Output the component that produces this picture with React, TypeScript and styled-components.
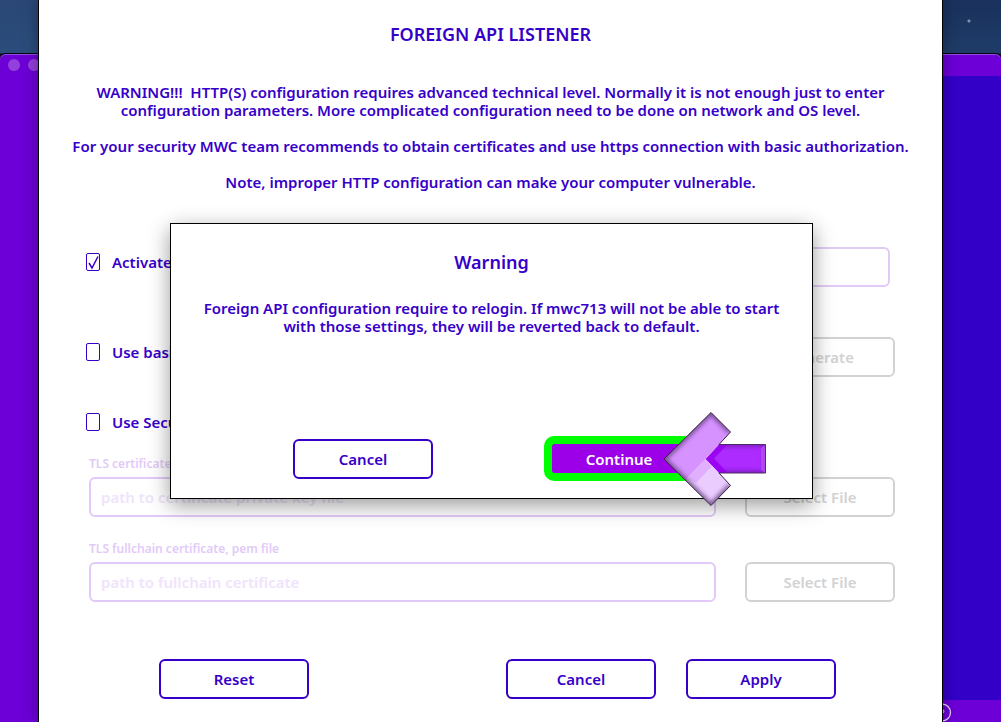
import React from "react";
import styled, { createGlobalStyle } from "styled-components";

const INK = "#3600c9";
const VIOLET = "#6c00d6";
const PALE = "#e2caf8";
const GREY = "#d2d2d2";

const GlobalStyle = createGlobalStyle`
  * { box-sizing: border-box; }
  body {
    margin: 0;
    font-family: "Noto Sans", "Open Sans", sans-serif;
    font-size: 15px;
    font-weight: 600;
    line-height: 18px;
    color: ${INK};
  }
  button, input { font: inherit; color: inherit; }
`;

const Desktop = styled.div`
  display: flex;
  min-height: 100vh;
  overflow: hidden;
`;

const Strip = styled.div<{ $width: number; $sky: string }>`
  flex: none;
  width: ${(p) => p.$width}px;
  display: flex;
  flex-direction: column;
  padding-top: 53px;
  background: ${(p) => p.$sky};
`;

const WindowEdge = styled.div<{ $side: "left" | "right" }>`
  flex: 1;
  display: flex;
  flex-direction: column;
  overflow: hidden;
  background: ${VIOLET};
  border-top: 1px solid #050510;
  box-shadow: inset 0 1px 0 #9350df;
  border-radius: ${(p) => (p.$side === "left" ? "6px 0 0 0" : "0 6px 0 0")};
`;

const TitleBar = styled.div`
  display: flex;
  flex: none;
  gap: 8px;
  height: 22px;
  padding: 5px 0 0 8px;
`;

const Light = styled.span`
  flex: none;
  width: 12px;
  height: 12px;
  border-radius: 50%;
  background: #9440dc;
`;

const WindowBody = styled.div`
  flex: 1;
  background: #3300c8;
`;

const StatusBar = styled.div`
  flex: none;
  height: 22px;
  overflow: hidden;
  padding-top: 3px;
`;

const Sheet = styled.main`
  position: relative;
  z-index: 1;
  flex: 1;
  min-width: 0;
  padding: 25px 47px 22px;
  background: #fff;
  border: solid #000;
  border-width: 0 1px;
  box-shadow: 0 0 14px rgba(0, 0, 0, 0.35);
`;

const Heading = styled.h1`
  margin: 0 0 40px;
  font-size: 18px;
  font-weight: 600;
  line-height: 18px;
  text-align: center;
`;

const Notice = styled.div`
  margin: 0 -20px 56px;
  text-align: center;
  white-space: pre-wrap;
  p { margin: 0 0 18px; }
`;

const Row = styled.div<{ $height: number; $after: number }>`
  display: flex;
  align-items: center;
  justify-content: space-between;
  height: ${(p) => p.$height}px;
  margin-bottom: ${(p) => p.$after}px;
`;

const CheckLabel = styled.label`
  display: flex;
  align-items: center;
  gap: 12px;
  padding-bottom: 10px;
`;

const SmallCheckLabel = styled(CheckLabel)`
  padding-bottom: 0;
`;

const CheckBox = styled.input`
  appearance: none;
  width: 14px;
  height: 18px;
  margin: 0;
  border: 1px solid ${INK};
  border-radius: 2px;
  &:checked {
    background: url("data:image/svg+xml,%3Csvg xmlns='http://www.w3.org/2000/svg' viewBox='0 0 12 16'%3E%3Cpath d='M2 9L5 14L11 2.500' fill='none' stroke='%233600c9' stroke-width='1.500'/%3E%3C/svg%3E");
  }
`;

const Field = styled.input`
  min-width: 0;
  height: 40px;
  padding: 0 10px;
  border: 2px solid ${PALE};
  border-radius: 6px;
  background: transparent;
  &::placeholder { color: #f0e3fc; opacity: 1; }
`;

const AddressField = styled(Field)`
  width: 300px;
  margin-right: 5px;
`;

const FileField = styled(Field)`
  flex: 1;
  margin-right: 29px;
`;

const Button = styled.button<{ $width?: number }>`
  flex: none;
  width: ${(p) => p.$width ?? 150}px;
  height: 40px;
  padding: 0;
  border: 2px solid ${INK};
  border-radius: 6px;
  background: #fff;
  color: ${INK};
  &:disabled { border-color: ${GREY}; color: ${GREY}; }
`;

const FileGroup = styled.div`
  margin: 0 0 24px 3px;
`;

const FieldLabel = styled.label`
  display: block;
  margin-bottom: 5px;
  font-size: 12px;
  line-height: 16px;
  color: ${PALE};
`;

const FileRow = styled.div`
  display: flex;
`;

const Footer = styled.div`
  display: flex;
  gap: 30px;
  padding: 33px 59px 0 73px;
`;

const Reset = styled(Button)`
  margin-right: auto;
`;

const Overlay = styled.div`
  position: absolute;
  inset: 0;
  display: flex;
  align-items: center;
  justify-content: center;
  padding-left: 2px;
`;

const Dialog = styled.section`
  width: 643px;
  height: 276px;
  display: flex;
  flex-direction: column;
  padding: 29px 30px 17px;
  background: #fff;
  border: 1px solid #000;
  box-shadow: 0 6px 20px rgba(0, 0, 0, 0.4);
  text-align: center;
`;

const DialogTitle = styled.h2`
  margin: 0 0 28px;
  font-size: 18px;
  font-weight: 600;
  line-height: 18px;
`;

const DialogText = styled.p`
  margin: 0;
`;

const DialogActions = styled.div`
  display: flex;
  align-items: center;
  justify-content: space-between;
  margin-top: auto;
  padding: 0 88px 0 92px;
`;

const ContinueWrap = styled.div`
  position: relative;
`;

const ContinueButton = styled(Button)`
  display: block;
  height: 45px;
  border: 8px solid #00ff00;
  border-radius: 10px;
  background: linear-gradient(#9b00e8, #9b00e8) padding-box, #00ff00;
  color: #fff;
`;

const Arrow = styled.svg`
  position: absolute;
  left: 119px;
  top: -24px;
`;

function PointerArrow() {
  return (
    <Arrow width="106" height="96" viewBox="0 0 106 96" aria-hidden="true">
      <defs>
        <clipPath id="head">
          <path d="M1 47L48 0.500L67.500 20L42.500 47L67.500 73.500L48 93.500Z" />
        </clipPath>
        <clipPath id="tail">
          <path d="M42.500 47L56 32.500H102.500V61H56Z" />
        </clipPath>
        <filter id="soft" x="-20%" y="-20%" width="140%" height="140%">
          <feGaussianBlur stdDeviation="2" />
        </filter>
      </defs>
      <g clipPath="url(#tail)">
        <path d="M42 32H103V62H42Z" fill="#ad2bff" />
        <path d="M54 32.500H102.500V61H54" fill="none" stroke="#5c1690" strokeWidth="4" opacity=".7" filter="url(#soft)" />
        <path d="M98 36L102 33V61L98 58Z" fill="#c060ff" opacity=".6" />
        <path d="M42.500 47L56 32H65L51 46.500L65 61H56Z" fill="#9600ee" opacity=".85" />
      </g>
      <path d="M55 32.500H102.500V61H55" fill="none" stroke="#4d2c68" />
      <g clipPath="url(#head)">
        <path d="M0 0H70V94H0Z" fill="#d692ff" />
        <path d="M42.500 47L24 66L24 94H70V74Z" fill="#ebccff" />
        <path d="M42.500 47L24 66L33 71L49 54Z" fill="#e0b0ff" />
        <path d="M67.500 20L48 0.500L1 47L48 93.500L67.500 73.500" fill="none" stroke="#5f3d78" strokeWidth="5" opacity=".8" filter="url(#soft)" />
      </g>
      <path d="M56 32.500L67.500 20L48 0.500L1 47L48 93.500L67.500 73.500L56 61" fill="none" stroke="#33263d" />
    </Arrow>
  );
}

export default function App() {
  return (
    <>
      <GlobalStyle />
      <Desktop>
        <Strip $width={38} $sky="linear-gradient(#2a4775, #2b4d7c 53px, #0a0a18 54px)">
          <WindowEdge $side="left">
            <TitleBar>
              <Light />
              <Light />
            </TitleBar>
          </WindowEdge>
        </Strip>

        <Sheet>
          <Heading>FOREIGN API LISTENER</Heading>
          <Notice>
            <p>
              {"WARNING!!!  HTTP(S) configuration requires advanced technical level. Normally it is not enough just to enter"}
              <br />
              configuration parameters. More complicated configuration need to be done on network and OS level.
            </p>
            <p>For your security MWC team recommends to obtain certificates and use https connection with basic authorization.</p>
            <p>Note, improper HTTP configuration can make your computer vulnerable.</p>
          </Notice>

          <Row $height={40} $after={50}>
            <CheckLabel>
              <CheckBox type="checkbox" defaultChecked />
              Activate
            </CheckLabel>
            <AddressField type="text" aria-label="Address" />
          </Row>
          <Row $height={40} $after={35}>
            <CheckLabel>
              <CheckBox type="checkbox" />
              Use basic
            </CheckLabel>
            <Button disabled>Generate</Button>
          </Row>
          <Row $height={20} $after={24}>
            <SmallCheckLabel>
              <CheckBox type="checkbox" />
              Use Secure
            </SmallCheckLabel>
          </Row>

          <FileGroup>
            <FieldLabel htmlFor="key">TLS certificate</FieldLabel>
            <FileRow>
              <FileField id="key" type="text" placeholder="path to certificate private key file" />
              <Button disabled>Select File</Button>
            </FileRow>
          </FileGroup>
          <FileGroup>
            <FieldLabel htmlFor="chain">TLS fullchain certificate, pem file</FieldLabel>
            <FileRow>
              <FileField id="chain" type="text" placeholder="path to fullchain certificate" />
              <Button disabled>Select File</Button>
            </FileRow>
          </FileGroup>

          <Footer>
            <Reset>Reset</Reset>
            <Button>Cancel</Button>
            <Button>Apply</Button>
          </Footer>

          <Overlay>
            <Dialog role="dialog" aria-labelledby="dialog-title">
              <DialogTitle id="dialog-title">Warning</DialogTitle>
              <DialogText>
                Foreign API configuration require to relogin. If mwc713 will not be able to start
                <br />
                with those settings, they will be reverted back to default.
              </DialogText>
              <DialogActions>
                <Button $width={140}>Cancel</Button>
                <ContinueWrap>
                  <ContinueButton>Continue</ContinueButton>
                  <PointerArrow />
                </ContinueWrap>
              </DialogActions>
            </Dialog>
          </Overlay>
        </Sheet>

        <Strip
          $width={58}
          $sky="radial-gradient(circle at 26px 21px, #7f93ae 1px, transparent 2px), linear-gradient(#19315c, #1f3c68 53px, #0a0a18 54px)"
        >
          <WindowEdge $side="right">
            <TitleBar />
            <WindowBody />
            <StatusBar>
              <svg width="10" height="19" viewBox="0 0 10 19" aria-hidden="true">
                <circle cx="-1" cy="9.500" r="8.500" fill="none" stroke="#e9dcfa" strokeWidth="1.200" />
                <path d="M0 6.500Q2 8 0 10" fill="none" stroke="#e9dcfa" />
              </svg>
            </StatusBar>
          </WindowEdge>
        </Strip>
      </Desktop>
    </>
  );
}
